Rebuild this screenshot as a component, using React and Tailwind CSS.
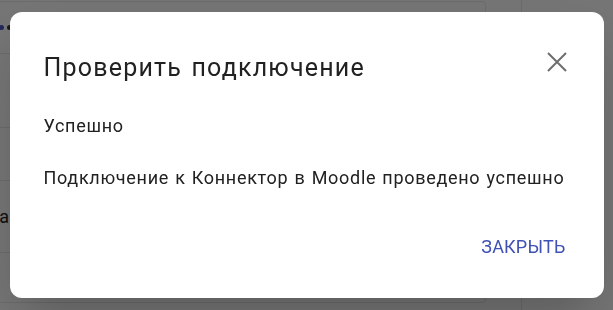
import { useState } from 'react';

function BackgroundPage() {
  return (
    <div className="relative h-[310px] w-full overflow-hidden bg-[#ebebeb] font-['Roboto',sans-serif]">
      {/* card behind dialog */}
      <div className="absolute left-[-10px] top-[1px] h-[302px] w-[496px] rounded-[4px] border border-[#d6d6d6] bg-[#ebebeb]">
        <div className="flex h-[52px] items-center gap-[3px] border-b border-[#d6d6d6] pl-[8px]">
          <span className="h-[5px] w-[5px] rounded-full bg-[#3f51b5]" />
          <span className="h-[5px] w-[5px] rounded-full bg-[#333]" />
        </div>
        <div className="h-[74px] border-b border-[#d6d6d6]" />
        <div className="h-[53px] border-b border-[#d6d6d6]" />
        <div className="flex h-[72px] items-center justify-end border-b border-[#d6d6d6] pr-[476px] text-[18px] text-[#212121]">
          а
        </div>
      </div>
      <div className="absolute left-[521px] top-0 h-full w-px bg-[#d6d6d6]" />
    </div>
  );
}

function CheckDialog({ onClose }) {
  return (
    <div className="fixed inset-0 z-10 flex items-center justify-center bg-black/50 font-['Roboto',sans-serif]">
      <div className="flex h-[286px] w-[594px] flex-col rounded-[12px] bg-white shadow-2xl">
        <div className="flex items-start justify-between pl-[34px] pr-[37px] pt-[40px]">
          <h2 className="text-[25px] leading-[32px] tracking-[1.2px] [word-spacing:2px] text-[#212121]">
            Проверить подключение
          </h2>
          <button
            type="button"
            onClick={onClose}
            className="flex h-[20px] w-[20px] items-center justify-center text-[#6e6e6e]"
          >
            <svg width="20" height="20" viewBox="0 0 20 20" fill="none" stroke="currentColor" strokeWidth="2">
              <path d="M1 1 L19 19 M19 1 L1 19" />
            </svg>
          </button>
        </div>
        <div className="flex flex-col pl-[34px] pt-[30px] text-[18px] leading-[24px] tracking-[0.7px] [word-spacing:1px] text-[#212121]">
          <p>Успешно</p>
          <p className="mt-[28px]">Подключение к Коннектор в Moodle проведено успешно</p>
        </div>
        <div className="mt-auto flex justify-end pb-[39px] pr-[38px]">
          <button
            type="button"
            onClick={onClose}
            className="text-[18px] uppercase leading-[24px] tracking-[0.2px] text-[#3f51b5]"
          >
            Закрыть
          </button>
        </div>
      </div>
    </div>
  );
}

export default function App() {
  const [open, setOpen] = useState(true);
  return (
    <div>
      <BackgroundPage />
      {open && <CheckDialog onClose={() => setOpen(true)} />}
    </div>
  );
}
